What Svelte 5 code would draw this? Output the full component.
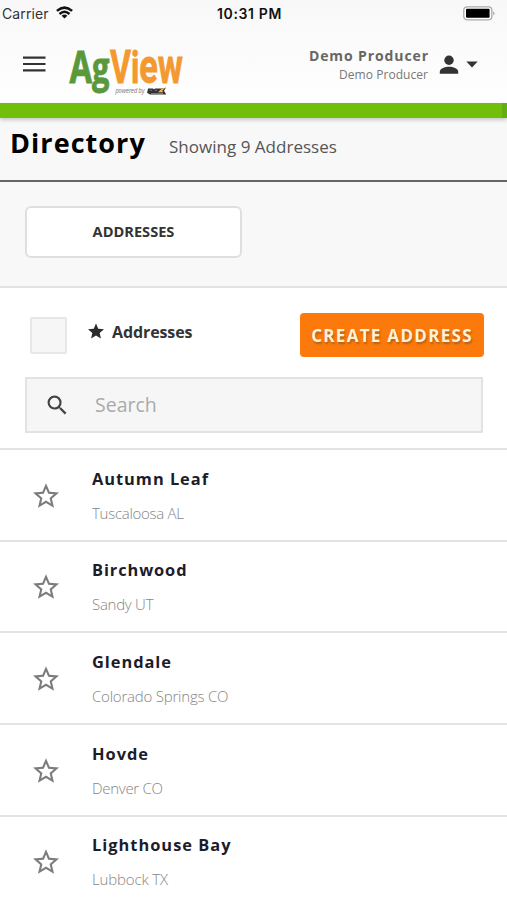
<script>
  const addresses = [
    { name: 'Autumn Leaf', place: 'Tuscaloosa AL', nameWidth: 116, placeWidth: 92 },
    { name: 'Birchwood', place: 'Sandy UT', nameWidth: 94.5, placeWidth: 61.5 },
    { name: 'Glendale', place: 'Colorado Springs CO', nameWidth: 79, placeWidth: 136.5 },
    { name: 'Hovde', place: 'Denver CO', nameWidth: 56, placeWidth: 71 },
    { name: 'Lighthouse Bay', place: 'Lubbock TX', nameWidth: 138.5, placeWidth: 76 }
  ];
</script>

<div class="screen">
  <div class="top">
    <div class="status">
      <div class="carrier">
        <span>Carrier</span>
        <svg width="17" height="13" viewBox="0 0 17 13" fill="none" stroke="#111" stroke-width="2.5">
          <path d="M.9 4.9Q8.5-1.7 16.1 4.9M3.5 8Q8.5 3.6 13.5 8" />
          <path d="M8.5 12.6 5.6 9.8Q8.5 7.4 11.4 9.8Z" fill="#111" stroke="none" />
        </svg>
      </div>
      <span class="clock">10:31 PM</span>
      <svg class="battery" width="33" height="15" viewBox="0 0 33 15">
        <rect x=".8" y=".8" width="28" height="13" rx="3.2" fill="#fff" stroke="#aaa" stroke-width="1.3" />
        <rect x="3" y="2.8" width="23.6" height="9" rx="1" fill="#000" />
        <path d="M30.3 5q2.4 2.3 0 4.8z" fill="#999" />
      </svg>
    </div>
    <header>
      <svg class="menu" width="23" height="16" viewBox="0 0 23 16" fill="#333">
        <path d="M0 .6h22.5v2.2H0zM0 6.9h22.5v2.2H0zM0 13.2h22.5v2.2H0z" />
      </svg>
      <svg class="logo" width="118" height="56" viewBox="0 0 118 56">
        <text x="0.5" y="38.5" font-family="Open Sans, sans-serif" font-weight="700" font-size="45.5" fill="#5b983b" stroke="#5b983b" stroke-width=".9" textLength="40" lengthAdjust="spacingAndGlyphs">A<tspan font-size="43">g</tspan></text>
        <text x="41" y="38.5" font-family="Roboto, sans-serif" font-weight="700" font-size="46" fill="#f3992f" stroke="#f3992f" stroke-width=".8" textLength="73" lengthAdjust="spacingAndGlyphs">V<tspan font-size="45">i</tspan><tspan font-size="49">ew</tspan></text>
        <text x="46.5" y="49" font-family="Liberation Sans, sans-serif" font-style="italic" font-size="6.5" fill="#777" textLength="29" lengthAdjust="spacingAndGlyphs">powered by</text>
        <path d="M79 44.6h5l1 .8 1-.8h8.5l2.5-1-2 3.2 2.3 3.6H81l-3-1.6.6-2z" fill="#333" />
        <path d="M80.8 46.3h2M86 46.3h2M82 49.5h12" stroke="#aaa" stroke-width=".6" />
        <path d="m89 48.2 3.3-3.2 4.2-1.4-3.2 3 .8 1.6z" fill="#f4b63d" />
      </svg>
      <div class="user">
        <strong>Demo Producer</strong>
        <span>Demo Producer</span>
      </div>
      <svg class="person" width="20" height="20" viewBox="0 0 20 20" fill="#333">
        <circle cx="10" cy="5.2" r="4.7" />
        <path d="M.8 18.7v-2C.8 13.5 6 11.7 10 11.7s9.2 1.8 9.2 5v2z" />
      </svg>
      <svg class="caret" width="12" height="7" viewBox="0 0 12 7" fill="#333"><path d="M.3.4h11.4L6 6.5z" /></svg>
    </header>
  </div>
  <div class="bar"></div>
  <section class="title">
    <h1>Directory</h1>
    <span>Showing 9 Addresses</span>
  </section>
  <nav><button>ADDRESSES</button></nav>
  <section class="tools">
    <div class="actions">
      <div class="check"></div>
      <div class="fav">
        <svg width="17" height="16" viewBox="2 2 20 19" fill="#2b2b2b"><path d="M12 17.27 18.18 21l-1.64-7.03L22 9.24l-7.19-.61L12 2 9.19 8.63 2 9.24l5.46 4.73L5.82 21z" /></svg>
        <span>Addresses</span>
      </div>
      <button class="create">CREATE ADDRESS</button>
    </div>
    <div class="search">
      <svg width="20" height="20" viewBox="2.5 2.5 18.5 18.5" fill="#444"><path d="M15.5 14h-.79l-.28-.27A6.47 6.47 0 0 0 16 9.5 6.5 6.5 0 1 0 9.5 16c1.61 0 3.09-.59 4.23-1.57l.27.28v.79l5 4.99L20.49 19zm-6 0a4.5 4.5 0 1 1 0-9 4.5 4.5 0 0 1 0 9z" /></svg>
      <span>Search</span>
    </div>
  </section>
  <ul>
    {#each addresses as address}
      <li>
        <svg class="star" width="26" height="25" viewBox="2 2 20 19" fill="#7c7c7c"><path d="m22 9.24-7.19-.62L12 2 9.19 8.63 2 9.24l5.46 4.73L5.82 21 12 17.27 18.18 21l-1.63-7.03zM12 15.4l-3.76 2.27 1-4.28-3.32-2.88 4.38-.38L12 6.1l1.71 4.04 4.38.38-3.32 2.88 1 4.28z" /></svg>
        <div class="entry">
          <svg width="200" height="24"><text class="name" x="0" y="17" textLength={address.nameWidth}>{address.name}</text></svg>
          <svg width="200" height="24"><text class="place" x="0" y="17" textLength={address.placeWidth}>{address.place}</text></svg>
        </div>
      </li>
    {/each}
  </ul>
</div>

<style>
  :global(body) { margin: 0; overflow: hidden; }
  .screen { width: 507px; height: 900px; overflow: hidden; background: #fff; font-family: 'Open Sans', sans-serif; color: #222; }
  svg { display: block; flex: none; }
  button { font-family: inherit; box-sizing: border-box; padding: 0; white-space: nowrap; }
  .top { height: 103px; background: linear-gradient(#f8f8f8, #fefefe 90%); }
  .status { height: 27px; display: grid; grid-template-columns: 1fr auto 1fr; align-items: center; font-family: Inter, sans-serif; font-size: 14px; color: #111; padding: 0 11px 0 2px; box-sizing: border-box; }
  .carrier { display: flex; align-items: center; gap: 7px; letter-spacing: .12px; color: #333; }
  .carrier svg { margin-top: -2px; }
  .clock { font-weight: 600; font-size: 14px; letter-spacing: .65px; margin-left: 1px; color: #111; }
  .battery { justify-self: end; margin-top: -1px; }
  header { height: 76px; display: flex; align-items: flex-start; }
  .menu { margin: 29px 0 0 23px; }
  .logo { margin: 17px 0 0 23px; overflow: visible; }
  .user { flex: 1; display: flex; flex-direction: column; align-items: flex-end; padding-top: 19px; white-space: nowrap; }
  .user strong { font-size: 14px; line-height: 20px; font-weight: 700; letter-spacing: .9px; margin-right: -1px; color: #666; }
  .user span { font-size: 12px; line-height: 17px; letter-spacing: .05px; color: #777; }
  .person { margin: 28px 0 0 11px; }
  .caret { margin: 34px 29px 0 7px; }
  .bar { height: 15px; background: #70bf0b; position: relative; box-shadow: 0 2px 4px #0003; }
  .bar::after { content: ''; position: absolute; right: 0; top: 0; width: 5px; height: 15px; background: #63af12; }
  .title { height: 64px; box-sizing: border-box; border-bottom: 2px solid #656565; background: #f8f8f8; display: flex; align-items: baseline; padding: 6px 0 0 10px; white-space: nowrap; }
  h1 { margin: 0; font-size: 27px; line-height: 38px; font-weight: 700; letter-spacing: 1.05px; color: #000; width: 159px; }
  .title span { font-size: 17px; color: #555; letter-spacing: .02px; }
  nav { height: 106px; box-sizing: border-box; border-bottom: 2px solid #e2e2e2; background: #f8f8f8; padding: 24px 0 0 25px; }
  nav button { display: block; width: 217px; height: 52px; border: 2px solid #dfdfdf; border-radius: 6px; background: #fff; font-size: 14.6px; font-weight: 700; color: #333; padding-bottom: 2px; }
  .tools { height: 162px; box-sizing: border-box; border-bottom: 2px solid #e3e3e3; padding: 24px 23px 0 25px; }
  .actions { display: flex; align-items: flex-start; height: 64px; }
  .check { width: 37px; height: 37px; box-sizing: border-box; border: 2px solid #e7e7e7; border-radius: 2px; background: #f6f6f6; margin: 5px 0 0 5px; }
  .fav { display: flex; align-items: center; gap: 8px; margin: 8px auto 0 21px; font-size: 16px; line-height: 24px; font-weight: 700; color: #333; }
  .fav svg { width: 16px; margin-top: -3px; }
  .fav span { letter-spacing: -.1px; }
  .create { width: 184px; height: 44px; margin-top: 1px; border: 0; border-radius: 4px; background: #fb7a0b; color: #fff2d7; font-size: 17px; font-weight: 700; letter-spacing: 1.3px; text-shadow: 1px 2px 2px #7b49218c; }
  .search { width: 458px; height: 56px; box-sizing: border-box; border: 2px solid #e2e2e2; background: #f6f6f6; display: flex; align-items: center; padding: 0 0 1px 20px; margin-top: 1px; }
  .search span { margin-left: 28px; font-size: 19.5px; color: #aaa; }
  ul { list-style: none; margin: 0; padding: 0; }
  li { height: 91.7px; box-sizing: border-box; border-bottom: 2px solid #e3e3e3; display: flex; align-items: flex-start; }
  .star { margin: 32.5px 0 0 33px; }
  .entry { margin: 17.5px 0 0 33px; display: flex; flex-direction: column; gap: 10px; }
  .name { font-size: 16.4px; font-weight: 700; fill: #1c1c2b; }
  .place { font-size: 15px; font-weight: 300; fill: #858585; }
</style>
